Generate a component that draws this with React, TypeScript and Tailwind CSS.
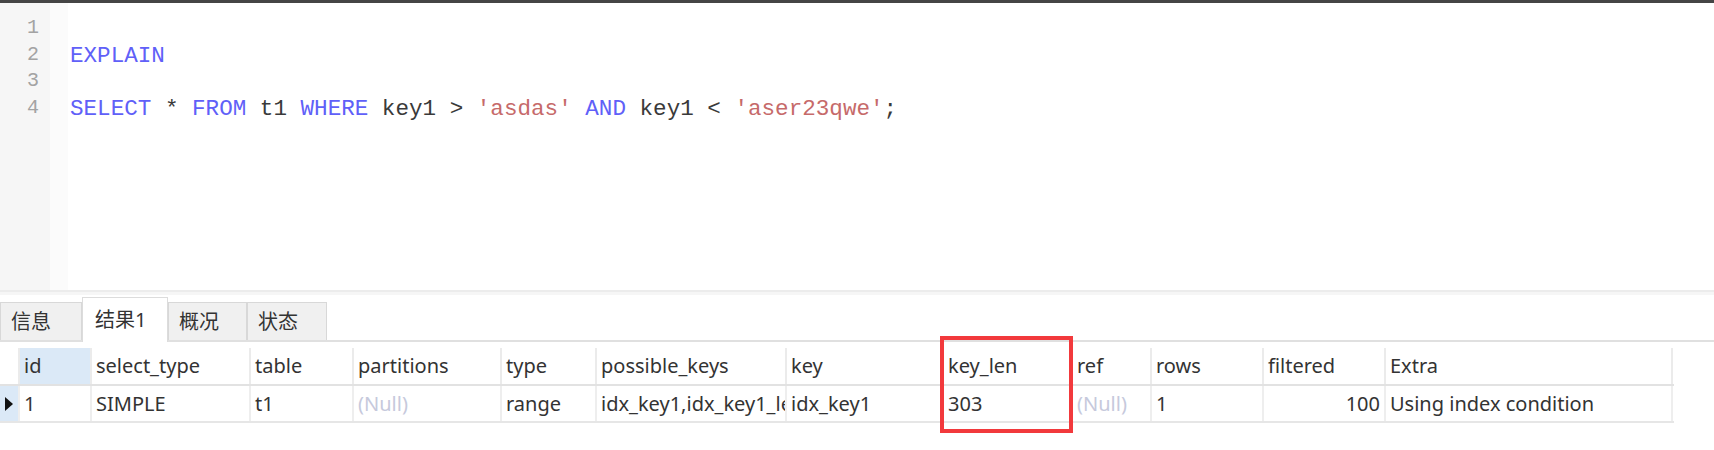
const codeLines = [
  [],
  [{ t: "EXPLAIN", c: "kw" }],
  [],
  [
    { t: "SELECT", c: "kw" },
    { t: " * ", c: "id" },
    { t: "FROM", c: "kw" },
    { t: " t1 ", c: "id" },
    { t: "WHERE", c: "kw" },
    { t: " key1 > ", c: "id" },
    { t: "'asdas'", c: "str" },
    { t: " ", c: "id" },
    { t: "AND", c: "kw" },
    { t: " key1 < ", c: "id" },
    { t: "'aser23qwe'", c: "str" },
    { t: ";", c: "id" },
  ],
];

const tokenColor: Record<string, string> = {
  kw: "text-[#6060f8]",
  id: "text-[#3a3a3a]",
  str: "text-[#c66a6a]",
};

const columns = [
  { name: "id", width: "w-[72px]" },
  { name: "select_type", width: "w-[159px]" },
  { name: "table", width: "w-[103px]" },
  { name: "partitions", width: "w-[148px]" },
  { name: "type", width: "w-[95px]" },
  { name: "possible_keys", width: "w-[190px]" },
  { name: "key", width: "w-[157px]" },
  { name: "key_len", width: "w-[129px]" },
  { name: "ref", width: "w-[79px]" },
  { name: "rows", width: "w-[112px]" },
  { name: "filtered", width: "w-[122px]" },
  { name: "Extra", width: "w-[289px]" },
];

const row = [
  { v: "1" },
  { v: "SIMPLE" },
  { v: "t1" },
  { v: "(Null)", nul: true },
  { v: "range" },
  { v: "idx_key1,idx_key1_length" },
  { v: "idx_key1" },
  { v: "303" },
  { v: "(Null)", nul: true },
  { v: "1" },
  { v: "100", right: true },
  { v: "Using index condition" },
];

const tabs = ["信息", "结果1", "概况", "状态"];
const tabWidths = ["w-[82px]", "w-[86px]", "w-[79px]", "w-[80px]"];

function Editor() {
  return (
    <div className="flex h-[287px]">
      <div className="w-[50px] bg-[#f6f6f6] pt-[12px] pr-[11px] text-right font-['Liberation_Mono',monospace] text-[20px] leading-[26.5px] text-[#a3a3a3]">
        {codeLines.map((_, i) => (
          <div key={i}>{i + 1}</div>
        ))}
      </div>
      <div className="w-[18px] bg-[#fbfbfb]" />
      <div className="flex-1 pl-[2px] pt-[13px] font-['Liberation_Mono',monospace] text-[22.6px] leading-[26.5px] whitespace-pre">
        {codeLines.map((line, i) => (
          <div key={i} className="h-[26.5px]">
            {line.map((tok, j) => (
              <span key={j} className={tokenColor[tok.c]}>
                {tok.t}
              </span>
            ))}
          </div>
        ))}
      </div>
    </div>
  );
}

function TabBar() {
  return (
    <div className="flex h-[47px] items-end border-b-2 border-[#e0e0e0] font-['Noto_Sans','Noto_Sans_CJK_SC',sans-serif] text-[20px] text-[#333]">
      {tabs.map((tab, i) =>
        i === 1 ? (
          <div
            key={tab}
            className={`${tabWidths[i]} -mb-[2px] flex h-[45px] items-center border-x border-t border-[#dcdcdc] bg-white pl-[12px]`}
          >
            {tab}
          </div>
        ) : (
          <div
            key={tab}
            className={`${tabWidths[i]} flex h-[38px] items-center border-x border-t border-[#d8d8d8] bg-[#f0f0f0] pl-[10px]`}
          >
            {tab}
          </div>
        )
      )}
    </div>
  );
}

function ResultGrid() {
  return (
    <div className="relative mt-[6px] w-[1674px] font-['Noto_Sans','Noto_Sans_CJK_SC',sans-serif] text-[20px] text-[#333]">
      <div className="flex h-[38px] border-b-2 border-[#e2e2e2]">
        <div className="w-[18px]" />
        {columns.map((col, i) => (
          <div
            key={col.name}
            className={`${col.width} flex items-center border-l-2 border-[#ebebeb] pl-[4px] ${i === 0 ? "bg-[#dbe9f7]" : ""} ${i === columns.length - 1 ? "border-r-2" : ""}`}
          >
            {col.name}
          </div>
        ))}
      </div>
      <div className="flex h-[37px] border-b-2 border-[#e6e6e6]">
        <div className="flex w-[18px] items-center justify-center bg-[#dbe9f7]">
          <svg width="10" height="16" viewBox="0 0 10 16">
            <polygon points="1,1 9,8 1,15" fill="#111" />
          </svg>
        </div>
        {row.map((cell, i) => (
          <div
            key={i}
            className={`${columns[i].width} flex items-center overflow-hidden whitespace-nowrap border-l-2 border-[#eeeeee] ${cell.right ? "justify-end pr-[4px]" : "pl-[4px]"} ${cell.nul ? "text-[#c6c9dc]" : ""} ${i === row.length - 1 ? "border-r-2" : ""}`}
          >
            {cell.v}
          </div>
        ))}
      </div>
      <div className="absolute left-[940px] top-[-12px] h-[97px] w-[133px] border-[4px] border-[#f2393c]" />
    </div>
  );
}

export default function App() {
  return (
    <div className="h-[450px] w-[1714px] overflow-hidden bg-white">
      <div className="h-[3px] bg-[#454545]" />
      <Editor />
      <div className="h-[5px] border-t-2 border-[#ececec] bg-[#f6f6f6]" />
      <TabBar />
      <ResultGrid />
    </div>
  );
}
